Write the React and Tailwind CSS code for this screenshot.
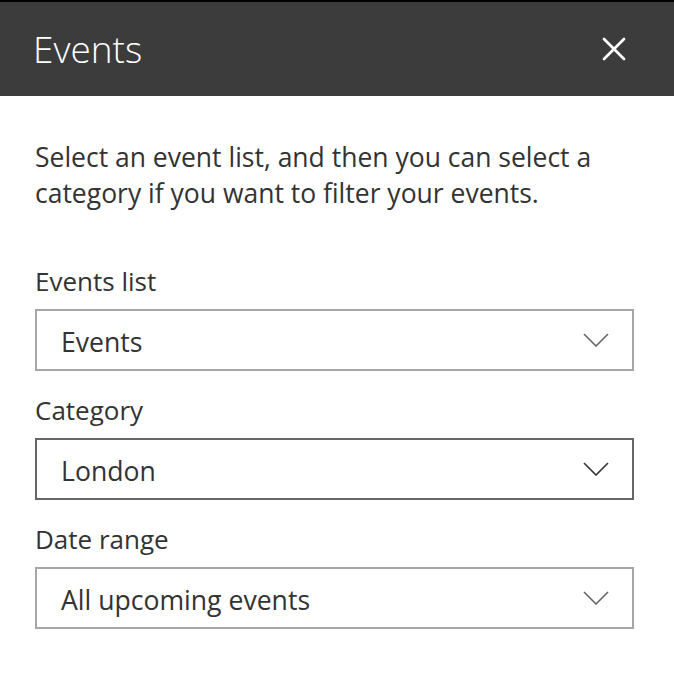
import { X } from "lucide-react";

function Chevron({ dark }) {
  return (
    <svg width="26" height="14" viewBox="0 0 26 14" fill="none">
      <path
        d="M1 1 L13 13 L25 1"
        stroke={dark ? "#333333" : "#666666"}
        strokeWidth="1.6"
      />
    </svg>
  );
}

function Dropdown({ label, value, hovered }) {
  return (
    <div>
      <div className="text-[26px] leading-[36px] text-[#333333]">{label}</div>
      <div
        className={
          "mt-[10px] flex h-[62px] items-center justify-between border-2 pl-[24px] pr-[23px] " +
          (hovered ? "border-[#666666]" : "border-[#a6a6a6]")
        }
      >
        <span className="pt-[5px] text-[26.6px] text-[#333333]">{value}</span>
        <Chevron dark={hovered} />
      </div>
    </div>
  );
}

export default function App() {
  return (
    <div
      className="h-[684px] w-[674px] bg-white"
      style={{ fontFamily: '"Open Sans", "Noto Sans", sans-serif' }}
    >
      <header className="flex h-[96px] items-center justify-between border-t-2 border-black bg-[#3c3c3c] pl-[33px] pr-[40px]">
        <h1 className="text-[37px] font-light text-white">Events</h1>
        <X size={40} strokeWidth={1.6} className="text-white" />
      </header>

      <div className="px-[35px] pt-[43px]">
        <p className="text-[26.5px] leading-[36px] text-[#333333]">
          Select an event list, and then you can select a category if you want
          to filter your events.
        </p>

        <div className="mt-[52px] flex flex-col gap-[21px] pr-[5px]">
          <Dropdown label="Events list" value="Events" />
          <Dropdown label="Category" value="London" hovered />
          <Dropdown label="Date range" value="All upcoming events" />
        </div>
      </div>
    </div>
  );
}
